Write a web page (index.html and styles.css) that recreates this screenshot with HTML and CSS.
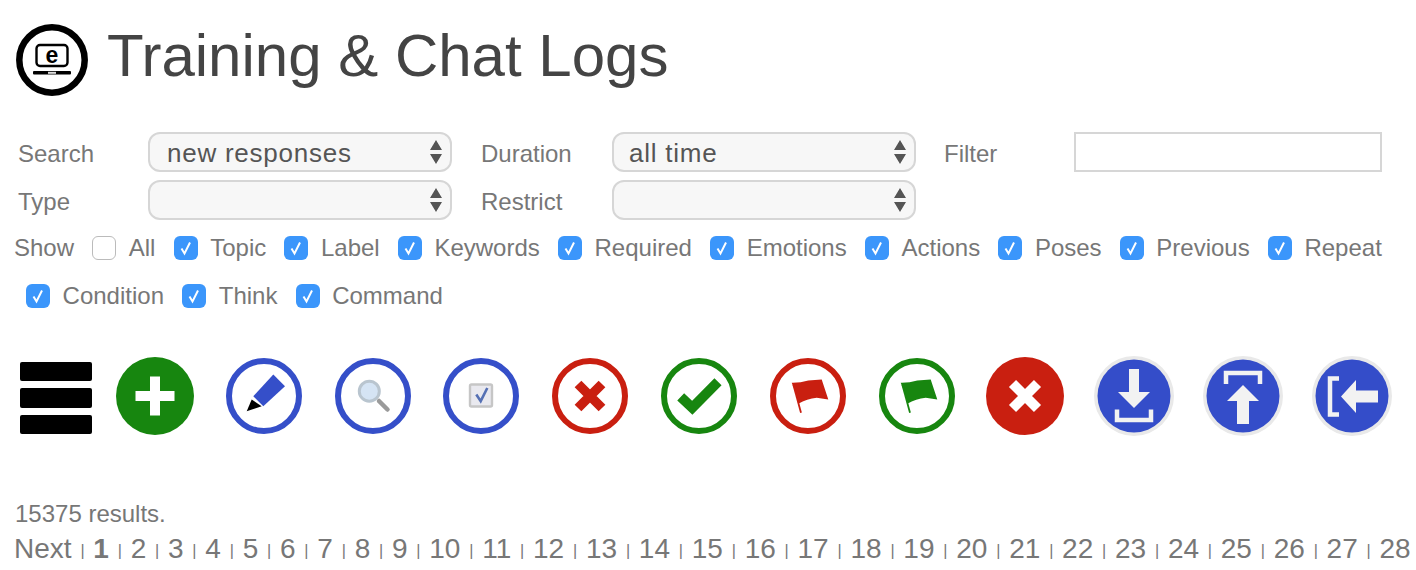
FILE: index.html
```html
<!DOCTYPE html>
<html lang="en">
<head>
  <meta charset="UTF-8">
  <title>Training &amp; Chat Logs</title>
  <link rel="stylesheet" href="styles.css">
</head>
<body>

<div class="title-bar">
  <svg class="logo" viewBox="0 0 72 72">
    <circle cx="36" cy="36" r="32.7" fill="#fff" stroke="#000" stroke-width="6.5"/>
    <rect x="20.5" y="21" width="31" height="21" rx="3.5" fill="none" stroke="#000" stroke-width="2.4"/>
    <text class="logo-e" x="36" y="38.5" text-anchor="middle">e</text>
    <rect x="17" y="47" width="38" height="3.6" rx="1" fill="#000"/>
    <rect x="32" y="47.8" width="8" height="2" fill="#ddd"/>
  </svg>
  <h1>Training &amp; Chat Logs</h1>
</div>

<form class="filters">
  <label class="first">Search</label>
  <select><option>new responses</option></select>
  <label>Duration</label>
  <select class="short-pad"><option>all time</option></select>
  <label class="last">Filter</label>
  <input type="text">

  <label class="first">Type</label>
  <select><option></option></select>
  <label>Restrict</label>
  <select><option></option></select>
</form>

<div class="checks">
  <span class="show">Show</span>
  <label class="check"><input type="checkbox">All</label>
  <label class="check"><input type="checkbox" checked>Topic</label>
  <label class="check"><input type="checkbox" checked>Label</label>
  <label class="check"><input type="checkbox" checked>Keywords</label>
  <label class="check"><input type="checkbox" checked>Required</label>
  <label class="check"><input type="checkbox" checked>Emotions</label>
  <label class="check"><input type="checkbox" checked>Actions</label>
  <label class="check"><input type="checkbox" checked>Poses</label>
  <label class="check"><input type="checkbox" checked>Previous</label>
  <label class="check"><input type="checkbox" checked>Repeat</label>
</div>
<div class="checks second">
  <label class="check"><input type="checkbox" checked>Condition</label>
  <label class="check"><input type="checkbox" checked>Think</label>
  <label class="check"><input type="checkbox" checked>Command</label>
</div>

<div class="toolbar">
  <div class="menu"><span></span><span></span><span></span></div>

  <svg class="tool" viewBox="0 0 80 80">
    <circle cx="40" cy="40" r="39" fill="#17860f"/>
    <path d="M35 20.5h10v14.5h14.5v10h-14.5v14.5h-10v-14.5h-14.5v-10h14.5z" fill="#fff"/>
  </svg>

  <svg class="tool" viewBox="0 0 80 80">
    <circle cx="40" cy="40" r="35" fill="#fff" stroke="#354fc9" stroke-width="6"/>
    <path d="M49.3 18.5L61 30.2 39.3 50.2 29.3 40.2z" fill="#354fc9"/>
    <path d="M22.7 55.2L27.7 43.5 37.7 50.2z" fill="#000"/>
  </svg>

  <svg class="tool" viewBox="0 0 80 80">
    <circle cx="40" cy="40" r="35" fill="#fff" stroke="#354fc9" stroke-width="6"/>
    <path d="M46 45L54.5 53.5" stroke="#9a9a9a" stroke-width="4.5" stroke-linecap="round"/>
    <circle cx="36.3" cy="35.2" r="10" fill="#d5e4f4" stroke="#b9c5cf" stroke-width="3"/>
  </svg>

  <svg class="tool" viewBox="0 0 80 80">
    <circle cx="40" cy="40" r="35" fill="#fff" stroke="#354fc9" stroke-width="6"/>
    <rect x="29" y="28.5" width="22" height="22" rx="1.5" fill="#e9e9ef" stroke="#c6c6c6" stroke-width="2.4"/>
    <path d="M35.3 38.5L39.7 45.2 46.3 32" fill="none" stroke="#5570b4" stroke-width="2.6"/>
  </svg>

  <svg class="tool" viewBox="0 0 80 80">
    <circle cx="40" cy="40" r="35" fill="#fff" stroke="#c91f10" stroke-width="6"/>
    <path d="M28 28L52 52M52 28L28 52" stroke="#c91f10" stroke-width="9.5"/>
  </svg>

  <svg class="tool" viewBox="0 0 80 80">
    <circle cx="40" cy="40" r="35" fill="#fff" stroke="#17860f" stroke-width="6"/>
    <path d="M21.7 40.8L33.3 51.8 59 25.8" fill="none" stroke="#17860f" stroke-width="10"/>
  </svg>

  <svg class="tool" viewBox="0 0 80 80">
    <circle cx="40" cy="40" r="35" fill="#fff" stroke="#c91f10" stroke-width="6"/>
    <path d="M23.7 26.8Q32 27 40.3 24.5L53.7 23.5 60.3 43.5 48.7 41.8Q39 43 30.3 47.8L27.5 36z" fill="#c91f10"/>
    <path d="M25.3 28.5L33 56.8" stroke="#c91f10" stroke-width="1.8"/>
  </svg>

  <svg class="tool" viewBox="0 0 80 80">
    <circle cx="40" cy="40" r="35" fill="#fff" stroke="#17860f" stroke-width="6"/>
    <path d="M23.7 26.8Q32 27 40.3 24.5L53.7 23.5 60.3 43.5 48.7 41.8Q39 43 30.3 47.8L27.5 36z" fill="#17860f"/>
    <path d="M25.3 28.5L33 56.8" stroke="#17860f" stroke-width="1.8"/>
  </svg>

  <svg class="tool" viewBox="0 0 80 80">
    <circle cx="40" cy="40" r="39" fill="#c91f10"/>
    <path d="M27.5 27.5L52.5 52.5M52.5 27.5L27.5 52.5" stroke="#fff" stroke-width="10"/>
  </svg>

  <svg class="tool" viewBox="0 0 80 80">
    <circle cx="40" cy="40" r="40" fill="#e9e9e9"/>
    <circle cx="40" cy="40" r="36.5" fill="#344dc9"/>
    <path d="M35 13h10v23h11L40 52 24 36h11z" fill="#f2f2f2"/>
    <path d="M23 53.5v10.5h34v-10.5" fill="none" stroke="#f2f2f2" stroke-width="4.5"/>
  </svg>

  <svg class="tool" viewBox="0 0 80 80">
    <circle cx="40" cy="40" r="40" fill="#e9e9e9"/>
    <circle cx="40" cy="40" r="36.5" fill="#344dc9"/>
    <path d="M23 28V17h34v11" fill="none" stroke="#f2f2f2" stroke-width="4.5"/>
    <path d="M34 68V45H24L40 29 56 45H46v23z" fill="#f2f2f2"/>
  </svg>

  <svg class="tool" viewBox="0 0 80 80">
    <circle cx="40" cy="40" r="40" fill="#e9e9e9"/>
    <circle cx="40" cy="40" r="36.5" fill="#344dc9"/>
    <path d="M27 22.5H18v36h9" fill="none" stroke="#f2f2f2" stroke-width="4.5"/>
    <path d="M66 34.5V46.5H44V57L29 40.5 44 24V34.5z" fill="#f2f2f2"/>
  </svg>
</div>

<p class="results">15375 results.</p>
<p class="pages"><a>Next</a><i>|</i><b>1</b><i>|</i><a>2</a><i>|</i><a>3</a><i>|</i><a>4</a><i>|</i><a>5</a><i>|</i><a>6</a><i>|</i><a>7</a><i>|</i><a>8</a><i>|</i><a>9</a><i>|</i><a>10</a><i>|</i><a>11</a><i>|</i><a>12</a><i>|</i><a>13</a><i>|</i><a>14</a><i>|</i><a>15</a><i>|</i><a>16</a><i>|</i><a>17</a><i>|</i><a>18</a><i>|</i><a>19</a><i>|</i><a>20</a><i>|</i><a>21</a><i>|</i><a>22</a><i>|</i><a>23</a><i>|</i><a>24</a><i>|</i><a>25</a><i>|</i><a>26</a><i>|</i><a>27</a><i>|</i><a>28</a></p>

</body>
</html>
```

FILE: styles.css
```css
html {
  overflow: hidden;
}

body {
  margin: 0;
  font-family: 'Liberation Sans', Arial, sans-serif;
  color: #777;
  background: #fff;
  height: 570px;
  overflow: hidden;
}

.title-bar {
  display: flex;
  align-items: center;
  gap: 19px;
  padding: 24px 0 0 16px;
}

.logo {
  width: 72px;
  height: 72px;
  flex: none;
}

.logo-e {
  font-size: 23px;
  font-weight: bold;
  fill: #000;
}

h1 {
  margin: 0 0 8px;
  font-size: 60px;
  font-weight: 400;
  line-height: 64px;
  color: #444;
}

.filters {
  display: grid;
  grid-template-columns: 130px 304px 160px 304px 158px 308px;
  grid-auto-rows: 40px;
  row-gap: 8px;
  margin-top: 36px;
  padding-left: 18px;
}

.filters label {
  font-size: 24px;
  line-height: 44px;
  padding-left: 29px;
}

.filters label.first {
  padding-left: 0;
}

.filters label.last {
  padding-left: 28px;
}

select {
  appearance: none;
  margin: 0;
  height: 40px;
  padding: 2px 30px 0 17px;
  border: 2px solid #d6d6d6;
  border-radius: 12px;
  font-family: inherit;
  font-size: 26px;
  letter-spacing: 0.75px;
  color: #555;
  background: #f7f7f7 url("data:image/svg+xml,%3Csvg xmlns='http://www.w3.org/2000/svg' width='14' height='26'%3E%3Cpath d='M7 1l6 10H1zM7 25L1 15h12z' fill='%23555'/%3E%3C/svg%3E") no-repeat right 7px center;
}

select.short-pad {
  padding-left: 15px;
}

.filters input {
  box-sizing: border-box;
  width: 308px;
  height: 40px;
  margin: 0;
  border: 2px solid #d6d6d6;
  background: #fff;
}

.checks {
  display: flex;
  align-items: center;
  gap: 18.15px;
  height: 24px;
  margin-top: 16px;
  padding-left: 14px;
  font-size: 24px;
  white-space: nowrap;
}

.checks.second {
  margin-top: 24px;
  padding-left: 26px;
}

.check {
  display: flex;
  align-items: center;
  gap: 12.6px;
}

.check input {
  appearance: none;
  width: 24px;
  height: 24px;
  margin: 0;
  border: 1px solid #bbb;
  border-radius: 6px;
  background: #fff;
}

.check input:checked {
  border: none;
  background: #3b96fb url("data:image/svg+xml,%3Csvg xmlns='http://www.w3.org/2000/svg' width='24' height='24'%3E%3Cpath d='M7.5 12.5l3 5 5.5-11' fill='none' stroke='%23fff' stroke-width='2'/%3E%3C/svg%3E") no-repeat center;
}

.toolbar {
  display: flex;
  align-items: center;
  gap: 28.8px;
  height: 80px;
  margin-top: 48px;
  padding-left: 20px;
}

.menu {
  display: flex;
  flex-direction: column;
  gap: 7px;
  width: 72px;
  margin: 4px -5.8px 0 0;
}

.menu span {
  height: 19.5px;
  border-radius: 2px;
  background: #000;
}

.tool {
  width: 80px;
  height: 80px;
  flex: none;
  filter: blur(0.4px);
}

p {
  margin: 0;
}

.results {
  margin-top: 64px;
  padding-left: 15px;
  font-size: 24px;
  line-height: 28px;
}

.pages {
  margin-top: 5px;
  padding-left: 14px;
  font-size: 28px;
  line-height: 32px;
  white-space: nowrap;
}

.pages i {
  display: inline-block;
  width: 21.75px;
  font-size: 16px;
  font-style: normal;
  text-align: center;
  vertical-align: 2px;
}
```
